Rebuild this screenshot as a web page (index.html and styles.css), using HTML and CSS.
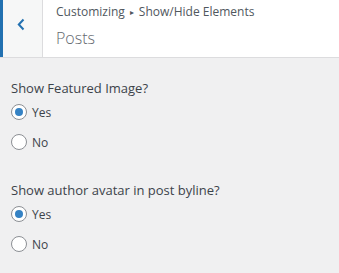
FILE: index.html
```html
<!DOCTYPE html>
<html lang="en">
<head>
  <meta charset="UTF-8" />
  <title>Posts</title>
  <link rel="stylesheet" href="styles.css">
</head>
<body>
  <div class="section-header">
    <button class="back-button" aria-label="Back">
      <svg width="8" height="13" viewBox="0 0 8 13"><path d="M6.5 1.5 L1.8 6.5 L6.5 11.5" fill="none" stroke="#2271b1" stroke-width="2"/></svg>
    </button>
    <div class="section-title">
      <span class="crumbs">Customizing<span class="sep">&#9656;</span>Show/Hide Elements</span>
      <h3>Posts</h3>
    </div>
  </div>

  <div class="controls">
    <div class="control">
      <span class="control-title">Show Featured Image?</span>
      <label class="radio"><input type="radio" name="featured" checked><span>Yes</span></label>
      <label class="radio"><input type="radio" name="featured"><span>No</span></label>
    </div>
    <div class="control">
      <span class="control-title">Show author avatar in post byline?</span>
      <label class="radio"><input type="radio" name="avatar" checked><span>Yes</span></label>
      <label class="radio"><input type="radio" name="avatar"><span>No</span></label>
    </div>
  </div>
</body>
</html>
```
FILE: styles.css
```css
:root {
  --blue: #2271b1;
  --border: #dcdcde;
  --text: #50575e;
  --bg: #f0f0f1;
}

* {
  margin: 0;
  padding: 0;
  box-sizing: border-box;
  font-family: 'Open Sans', sans-serif;
}

body {
  background-color: var(--bg);
  color: var(--text);
  width: 339px;
  height: 273px;
  overflow: hidden;
}

.section-header {
  display: flex;
  height: 58px;
  background-color: #fff;
  border-bottom: 1px solid var(--border);
}

.back-button {
  width: 43px;
  height: 100%;
  border: none;
  border-left: 3px solid var(--blue);
  border-right: 1px solid var(--border);
  background-color: #f6f7f7;
  display: flex;
  align-items: center;
  justify-content: center;
  padding: 0 4px 9px 0;
}

.section-title {
  padding: 4px 0 0 13px;
}

.crumbs {
  display: block;
  font-size: 12px;
  line-height: 16px;
  color: var(--text);
}

.sep {
  font-size: 8px;
  margin: 0 5px;
  position: relative;
  top: -1px;
}

.section-title h3 {
  margin-top: 5px;
  font-size: 16px;
  font-weight: 300;
  line-height: 24px;
  color: #646970;
}

.controls {
  padding: 21px 11px 0;
  display: flex;
  flex-direction: column;
  gap: 24px;
}

.control {
  display: flex;
  flex-direction: column;
}

.control-title {
  font-size: 13px;
  line-height: 18px;
  color: #3c434a;
}

.radio {
  display: flex;
  align-items: center;
  gap: 5px;
  height: 30px;
  font-size: 12px;
  color: #3c434a;
}

.radio input {
  appearance: none;
  width: 16px;
  height: 16px;
  border: 1px solid #8c8f94;
  border-radius: 50%;
  background-color: #fff;
  display: grid;
  place-items: center;
}

.radio input:checked::before {
  content: "";
  width: 8px;
  height: 8px;
  border-radius: 50%;
  background-color: #3582c4;
}
```
